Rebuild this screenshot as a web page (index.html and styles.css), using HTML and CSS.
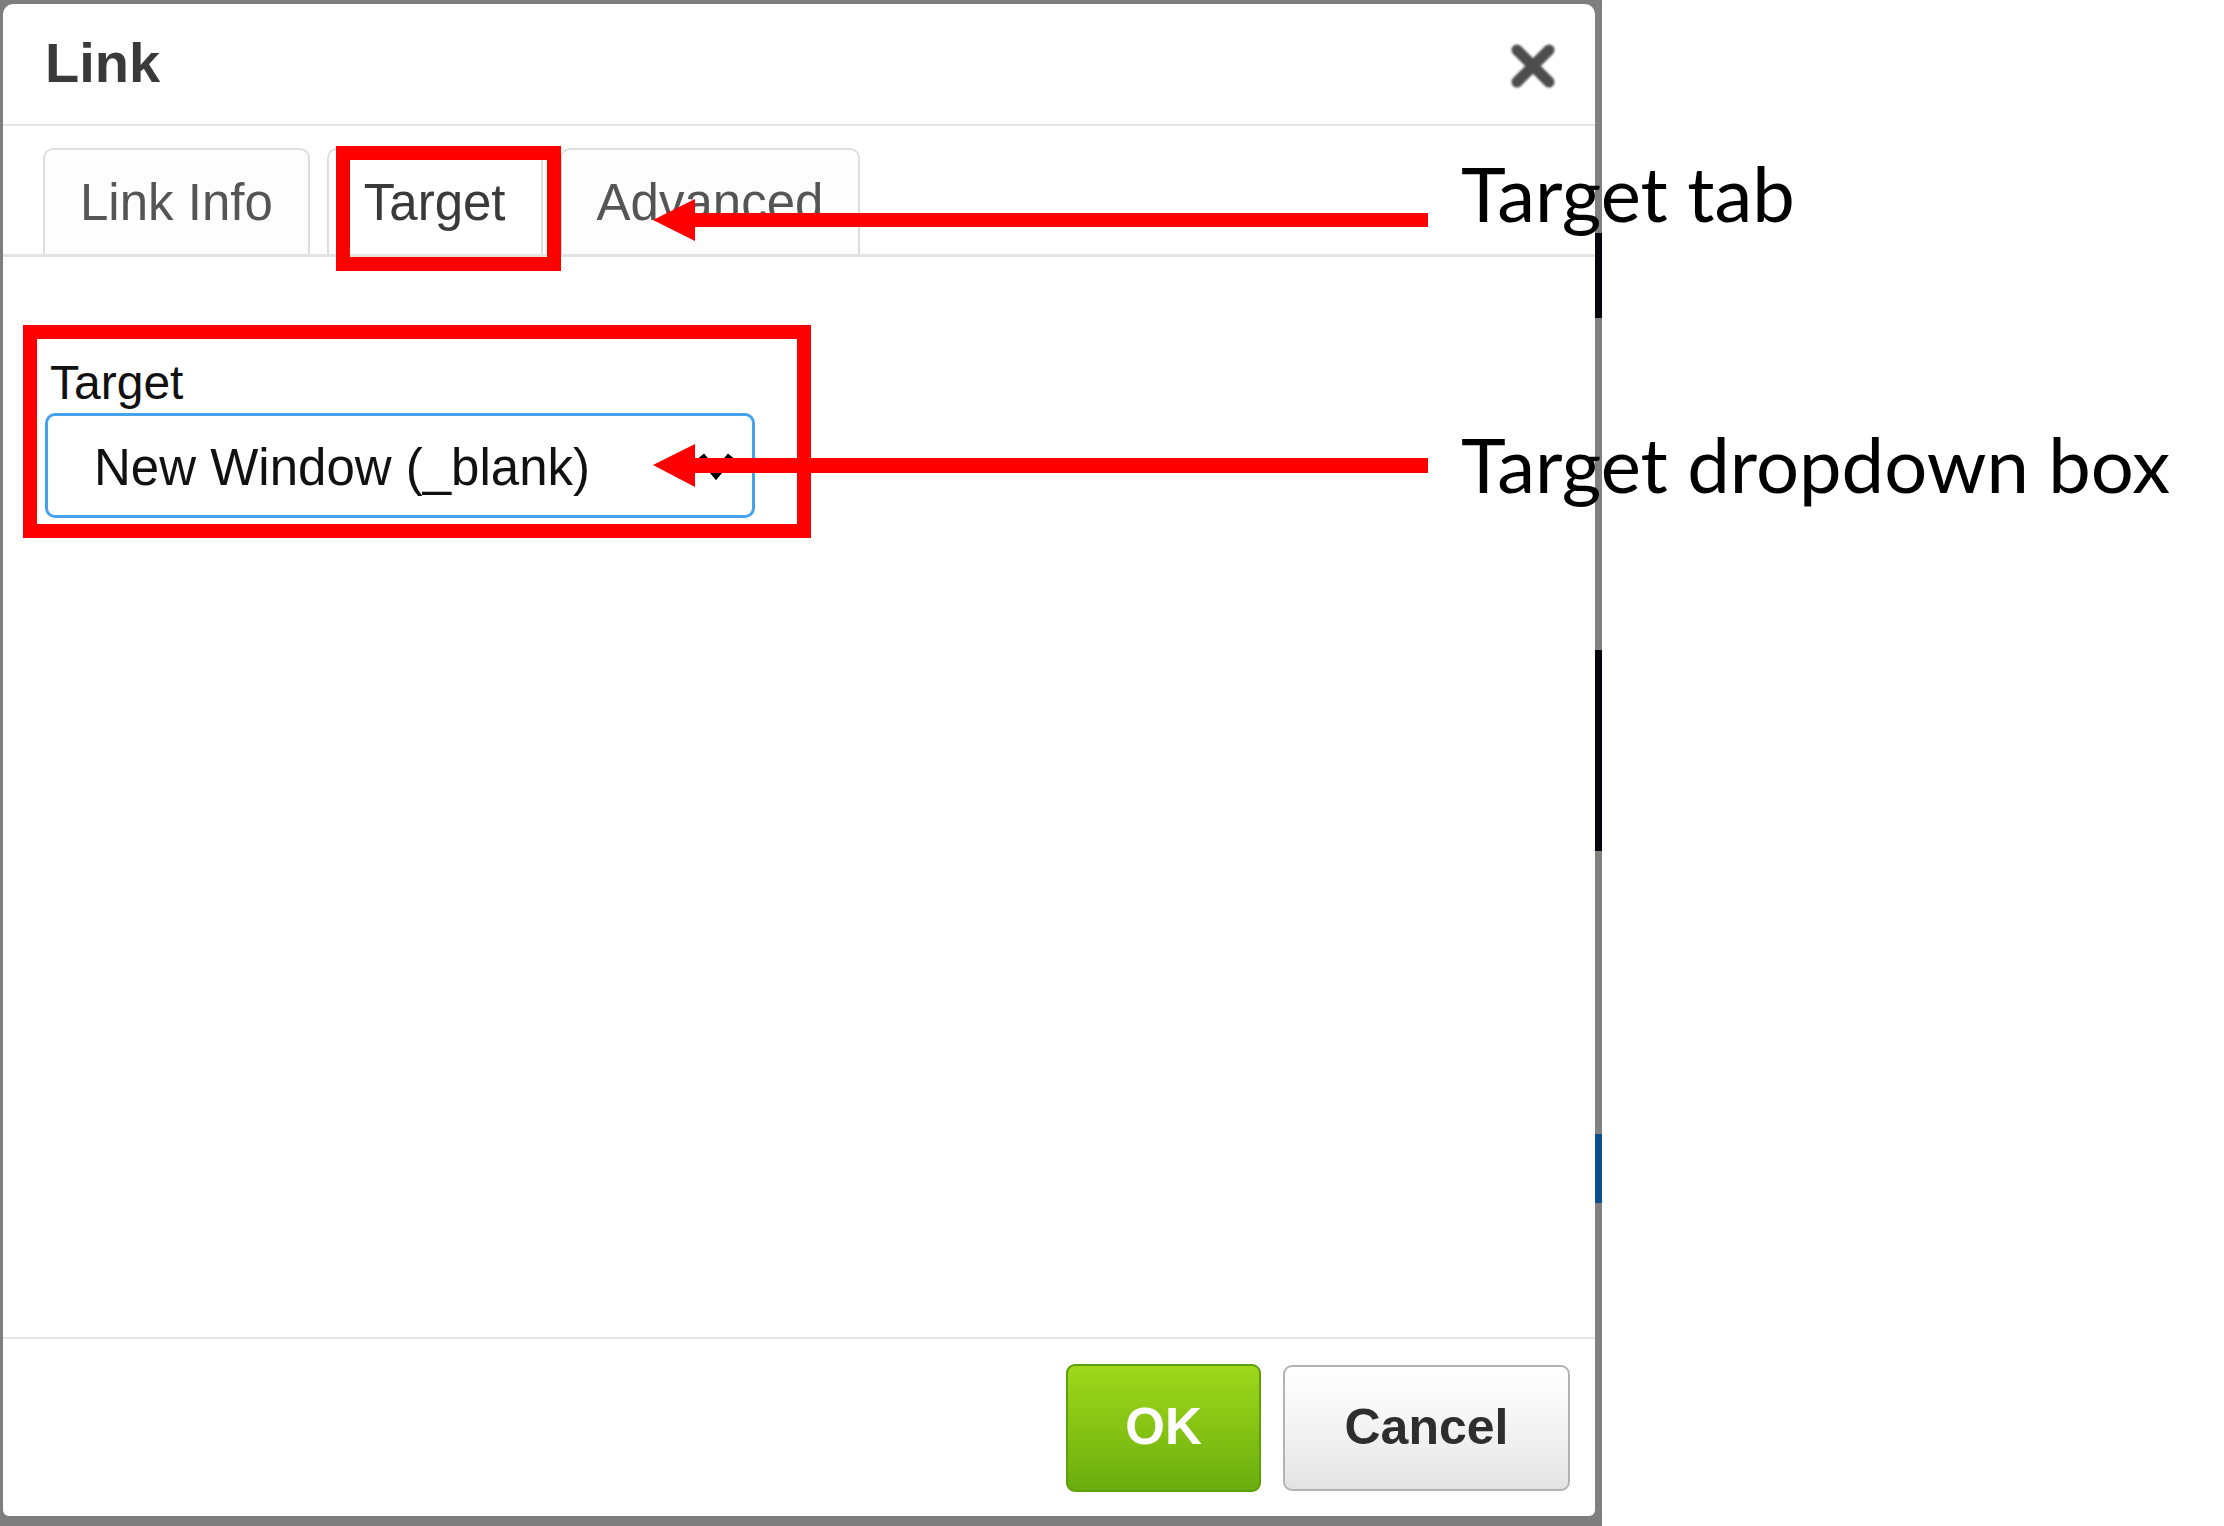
FILE: index.html
```html
<!DOCTYPE html>
<html lang="en">
<head>
<meta charset="utf-8">
<title>Link dialog – Target tab</title>
<link rel="stylesheet" href="styles.css">
</head>
<body>
<div class="page">
  <div class="frame">
    <div class="dialog">
      <div class="dlg-header">
        <span class="dlg-title">Link</span>
        <span class="dlg-close" aria-label="Close">
          <svg width="46" height="46" viewBox="0 0 46 46"><path d="M7 7 L39 39 M39 7 L7 39" stroke="#4d4d4d" stroke-width="11" stroke-linecap="round" fill="none"/></svg>
        </span>
      </div>
      <div class="tabs">
        <div class="tab">Link Info</div>
        <div class="tab tab-active">Target</div>
        <div class="tab">Advanced</div>
      </div>
      <div class="dlg-body">
        <div class="field-label">Target</div>
        <div class="select">
          <span class="select-value">New Window (_blank)</span>
          <svg class="chev" width="40" height="30" viewBox="0 0 40 30"><polyline points="5,5 20,23 35,5" fill="none" stroke="#000" stroke-width="8"/></svg>
        </div>
      </div>
      <div class="dlg-footer">
        <span class="btn btn-ok">OK</span>
        <span class="btn btn-cancel">Cancel</span>
      </div>
    </div>
    <div class="backdrop-strip"></div>
  </div>

  <div class="callout-box callout-box-tab"></div>
  <div class="callout-box callout-box-field"></div>
  <svg class="arrows" width="2224" height="1526" viewBox="0 0 2224 1526">
    <polygon points="653,220 695,199 695,241" fill="#ff0000"/>
    <rect x="694" y="213" width="734" height="14" fill="#ff0000"/>
    <polygon points="653,465 695,444 695,487" fill="#ff0000"/>
    <rect x="694" y="458" width="734" height="15" fill="#ff0000"/>
  </svg>
  <div class="callout-text callout-text-tab">Target tab</div>
  <div class="callout-text callout-text-field">Target dropdown box</div>
</div>
</body>
</html>
```
FILE: styles.css
```css
html, body {
  margin: 0;
  padding: 0;
  background: #ffffff;
}

.page {
  position: relative;
  width: 2224px;
  height: 1526px;
  overflow: hidden;
  display: flex;
  font-family: "Liberation Sans", Arial, sans-serif;
}

.frame {
  width: 1602px;
  height: 1526px;
  box-sizing: border-box;
  padding: 4px 0 10px 3px;
  background: #7e7e7e;
  display: flex;
}

.dialog {
  flex: 1;
  display: flex;
  flex-direction: column;
  background: #ffffff;
  border-radius: 10px 10px 6px 6px;
}

.backdrop-strip {
  width: 7px;
  background: linear-gradient(to bottom,
    #808080 0, #808080 229px,
    #05070c 229px, #05070c 314px,
    #808080 314px, #808080 646px,
    #05070c 646px, #05070c 847px,
    #808080 847px, #808080 1130px,
    #0d4f8e 1130px, #0d4f8e 1199px,
    #808080 1199px);
}

/* header */
.dlg-header {
  height: 122px;
  box-sizing: border-box;
  border-bottom: 2px solid #e4e4e4;
  padding: 31px 39px 0 42px;
  display: flex;
  justify-content: space-between;
  align-items: flex-start;
}

.dlg-title {
  font-size: 56px;
  line-height: 1;
  font-weight: bold;
  color: #3a3a3a;
}

.dlg-close {
  display: block;
  margin-top: 8px;
  width: 46px;
  height: 46px;
}

.dlg-close svg {
  display: block;
  filter: blur(0.8px);
}

/* tabs */
.tabs {
  display: flex;
  align-items: flex-end;
  gap: 17px;
  padding: 22px 0 0 40px;
  border-bottom: 3px solid #e3e3e3;
}

.tab {
  height: 106px;
  box-sizing: border-box;
  padding: 27px 35px 0;
  border: 2px solid #dedede;
  border-bottom: none;
  border-radius: 10px 10px 0 0;
  background: #fdfdfd;
  font-size: 51px;
  line-height: 1;
  color: #555555;
  white-space: nowrap;
}

.tab-active {
  background: #ffffff;
  color: #3a3a3a;
}

/* body */
.dlg-body {
  flex: 1;
  padding: 102px 0 0 42px;
}

.field-label {
  font-size: 48px;
  line-height: 1;
  color: #111111;
  padding-left: 5px;
  margin-bottom: 6px;
}

.select {
  width: 710px;
  height: 105px;
  box-sizing: border-box;
  border: 3px solid #46a2ec;
  border-radius: 10px;
  padding: 4px 16px 0 46px;
  display: flex;
  align-items: center;
  justify-content: space-between;
  background: #ffffff;
}

.select-value {
  font-size: 51px;
  line-height: 1;
  color: #111111;
  white-space: nowrap;
}

.chev {
  display: block;
  margin-top: -4px;
}

/* footer */
.dlg-footer {
  height: 179px;
  box-sizing: border-box;
  border-top: 2px solid #e4e4e4;
  padding: 25px 25px 0;
  display: flex;
  justify-content: flex-end;
  align-items: flex-start;
  gap: 22px;
}

.btn {
  display: flex;
  align-items: center;
  justify-content: center;
  box-sizing: border-box;
  border-radius: 9px;
  font-size: 51px;
  font-weight: bold;
  line-height: 1;
}

.btn-ok {
  width: 195px;
  height: 128px;
  background: linear-gradient(to bottom, #9fd81b 0%, #86c314 50%, #6aad0e 100%);
  border: 2px solid #5e9f0c;
  color: #ffffff;
  padding-bottom: 4px;
}

.btn-cancel {
  width: 287px;
  height: 126px;
  margin-top: 1px;
  background: linear-gradient(to bottom, #ffffff 0%, #f2f2f2 55%, #e3e3e3 100%);
  border: 2px solid #b3b3b3;
  color: #2e2e2e;
  font-size: 50px;
  padding-bottom: 2px;
}

/* annotations */
.callout-box {
  position: absolute;
  box-sizing: border-box;
  border: 14px solid #ff0000;
}

.callout-box-tab {
  left: 336px;
  top: 146px;
  width: 225px;
  height: 125px;
}

.callout-box-field {
  left: 23px;
  top: 325px;
  width: 788px;
  height: 213px;
}

.arrows {
  position: absolute;
  left: 0;
  top: 0;
  pointer-events: none;
}

.callout-text {
  position: absolute;
  left: 1461px;
  font-family: "Lato", "Open Sans", sans-serif;
  font-size: 76px;
  line-height: 1;
  color: #000000;
  white-space: nowrap;
}

.callout-text-tab {
  top: 155px;
}

.callout-text-field {
  top: 426px;
}
```
